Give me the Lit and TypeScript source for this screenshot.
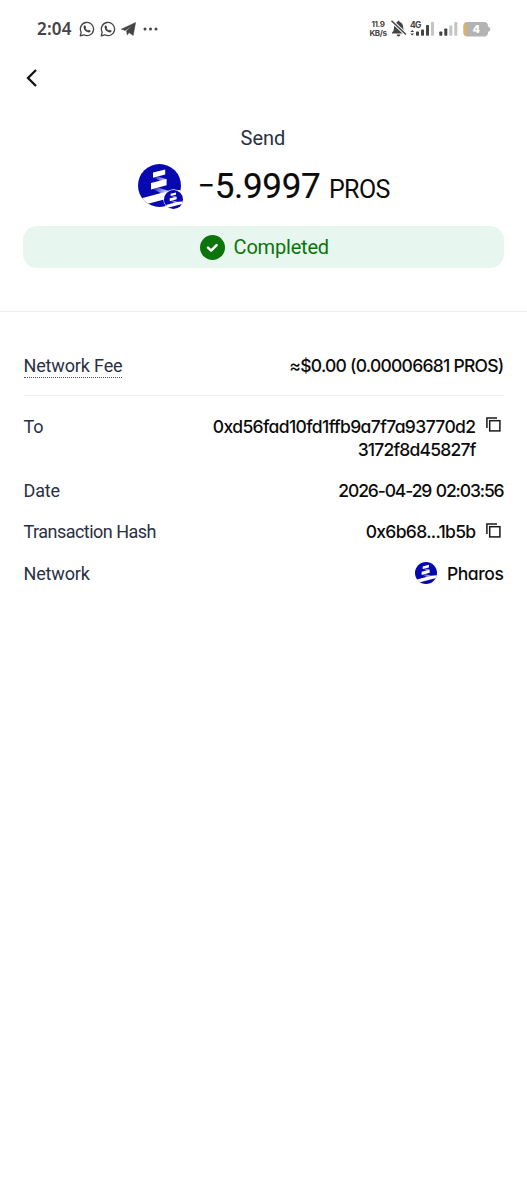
import { LitElement, html, css, svg } from "lit";
import { customElement, property } from "lit/decorators.js";

@customElement("pharos-logo")
class PharosLogo extends LitElement {
  static styles = css`
    :host { display: block; }
    svg { display: block; width: 100%; height: 100%; }
  `;
  render() {
    return html`<svg viewBox="0 0 43 43">
      <defs>
        <clipPath id="c"><circle cx="21.5" cy="21.5" r="21.5" /></clipPath>
        <linearGradient id="g" x1="0" y1="0" x2="1" y2="0.3">
          <stop offset="0" stop-color="#fff" stop-opacity="0.05" />
          <stop offset="1" stop-color="#fff" stop-opacity="0.8" />
        </linearGradient>
      </defs>
      <g clip-path="url(#c)">
        <rect width="43" height="43" fill="#0808b0" />
        <path d="M15 8.6 27.2 5.5V10.6L15 13.8Z" fill="#fff" />
        <path d="M16.5 13.4 20 12.4 28.6 15.3 22 17Z" fill="url(#g)" />
        <path d="M13 18.9 28.6 15V21.2L13 25.4Z" fill="#fff" />
        <path d="M15 24.9 20 23.4 31 27 23 29.2Z" fill="url(#g)" />
        <path d="M0 35.2 31.5 26.7 43 26V31L4.5 41.2 0 42Z" fill="#fff" />
      </g>
    </svg>`;
  }
}

@customElement("copy-icon")
class CopyIcon extends LitElement {
  static styles = css`
    :host { display: block; width: 15px; height: 15px; }
    svg { display: block; }
  `;
  render() {
    return html`<svg width="15" height="15" viewBox="0 0 15 15" fill="none" stroke="#1a1a1a" stroke-width="1.5">
      <path d="M.9 11V.9H11" /><rect x="3.7" y="3.7" width="10.2" height="10.2" />
    </svg>`;
  }
}

@customElement("detail-row")
class DetailRow extends LitElement {
  static styles = css`
    :host { display: flex; justify-content: space-between; align-items: flex-start; line-height: 23px; }
    .label { font-family: Roboto, sans-serif; font-size: 18px; color: #2a2f45; letter-spacing: -0.15px; white-space: nowrap; }
    .long { letter-spacing: -0.53px; }
    .hint { border-bottom: 1px dotted #50556a; }
    .value { text-align: right; color: #0b0b0b; font: 450 17.5px/23px Inter, sans-serif; font-feature-settings: "cv11"; letter-spacing: -0.55px; }
  `;
  @property() label = "";
  @property({ type: Boolean }) hint = false;
  render() {
    const tone = this.hint ? "hint" : this.label.length > 12 ? "long" : "";
    return html`<span class="label ${tone}">${this.label}</span><div class="value"><slot></slot></div>`;
  }
}

const chat = svg`<path d="M1.2 14.8 2.2 11.2A6.6 6.6 0 1 1 4.8 13.8Z" fill="none" stroke="#444" stroke-width="1.3" stroke-linejoin="round"/>
  <path d="M5.2 4.6 6.3 4.4 7.2 6.4 6.6 7.3Q7.4 8.9 9 9.5L9.8 8.7 11.7 9.7Q11.6 11.5 9.8 11.5 5 10.6 4.6 6.5 4.5 5.2 5.2 4.6Z" fill="#444"/>`;

@customElement("app-root")
class AppRoot extends LitElement {
  static styles = css`
    :host { display: block; height: 1200px; background: #fff; font-family: Roboto, sans-serif; color: #0b0b0b; overflow: hidden; }
    svg { display: block; flex: none; }
    .status { display: flex; align-items: center; height: 57px; padding: 0 36px 0 37px; box-sizing: border-box; color: #444; }
    .clock { font: 600 17px/20px "Noto Sans", sans-serif; width: 42px; white-space: nowrap; letter-spacing: 0.2px; }
    .apps { display: flex; align-items: center; gap: 5px; flex: 1; }
    .rate { font: 700 8px/9px Inter, sans-serif; text-align: center; width: 18px; letter-spacing: -0.4px; margin-right: 3px; white-space: nowrap; }
    .nav { height: 42px; padding-left: 25px; display: flex; align-items: center; }
    .title { margin-top: 27px; height: 24px; line-height: 24px; text-align: center; font-size: 20px; color: #2a2f45; padding-right: 1px; }
    .amount { display: flex; align-items: center; padding-left: 137.5px; height: 47px; margin-top: 12px; }
    .token { position: relative; width: 43px; height: 43px; margin-right: 17px; flex: none; }
    .badge { position: absolute; left: 26px; top: 26px; width: 19px; height: 19px; border-radius: 50%; box-shadow: 0 0 0 .7px #fff; }
    .sum { display: flex; align-items: baseline; white-space: nowrap; padding-top: 2px; }
    .minus { font-size: 30px; line-height: 30px; letter-spacing: 0; vertical-align: 2.5px; }
    .num { font-size: 35px; line-height: 41px; letter-spacing: -0.3px; -webkit-text-stroke: 0.2px #0b0b0b; }
    .unit { font-size: 25px; margin-left: 8.5px; letter-spacing: -0.6px; }
    .pill { margin: 17px 23.5px 0 23px; height: 42px; border-radius: 14px; background: #e7f7ef; display: flex; align-items: center; justify-content: center; gap: 9px; color: #0b740b; font-size: 20px; letter-spacing: -0.2px; padding-left: 2px; box-sizing: border-box; }
    .rule { height: 1px; background: #ececee; margin-top: 43px; }
    .details { padding: 0 23.5px 0 23.5px; }
    .fee { padding: 42px 0 17px; border-bottom: 1px solid #ededef; }
    .list { display: flex; flex-direction: column; gap: 18.4px; padding-top: 18.6px; }
    .copy { display: flex; align-items: flex-start; gap: 10px; }
    .copy copy-icon { margin: 2.5px 3px 0 0; }
    .addr { letter-spacing: -0.62px; }
    .addr2 { letter-spacing: -0.8px; }
    .hash { letter-spacing: -0.68px; }
    .date { letter-spacing: -1.13px; word-spacing: 1px; }
    .name { letter-spacing: -0.4px; }
    .net { display: flex; align-items: center; gap: 10px; }
    .net pharos-logo { width: 22px; height: 22px; }
    .fee-v { letter-spacing: -0.74px; }
  `;
  render() {
    return html`
      <div class="status">
        <span class="clock">2:04</span>
        <div class="apps">
          <svg width="16" height="16" viewBox="0 0 16 16">${chat}</svg>
          <svg width="16" height="16" viewBox="0 0 16 16">${chat}</svg>
          <svg width="15" height="14" viewBox="0 0 15 14"><path d="M.3 7.2 14.6.4 12.2 13.4 8 10.6 6.3 13 5.5 8.8 11 3.8 4.2 8.4Z" fill="#444" stroke="#444" stroke-width=".5" /></svg>
          <svg width="17" height="4" viewBox="0 0 17 4" fill="#444"><circle cx="4" cy="2" r="1.5" /><circle cx="9.5" cy="2" r="1.5" /><circle cx="15" cy="2" r="1.5" /></svg>
        </div>
        <div class="rate">11.9<br />KB/s</div>
        <svg width="101" height="20" viewBox="390 18.5 101 20">
          <path d="M392 33V32Q394 30.5 394 27.5 394 22.5 397.3 21.5 397.5 20 398.5 20 399.5 20 399.7 21.5 403.2 22.5 403.2 27.5 403.2 30.5 405.5 32V33ZM396.5 34H400.5Q400 36 398.5 36 397 36 396.5 34Z" fill="#444" />
          <path d="M391.5 20.2 406 34" stroke="#fff" stroke-width="3.4" /><path d="M391.5 20.2 406 34" stroke="#444" stroke-width="1.5" />
          <text x="410" y="27.2" font-family="Inter" font-weight="700" font-size="8.5" fill="#444" textLength="11.5">4G</text>
          <path d="M410.3 31.5 412.2 29.4 414.1 31.5ZM410.3 33 412.2 35.1 414.1 33Z" fill="#444" />
          <g fill="#444"><rect x="416" y="31" width="3" height="4.3" rx=".7" /><rect x="421" y="29" width="3" height="6.3" rx=".7" /><rect x="426" y="24.5" width="3" height="10.8" rx=".7" /></g>
          <rect x="431" y="21.5" width="3" height="13.8" rx=".7" fill="#c4c4c4" />
          <g fill="#444"><rect x="439.3" y="31" width="3" height="4.3" rx=".7" /><rect x="444.3" y="28" width="3" height="7.3" rx=".7" /></g>
          <g fill="#c4c4c4"><rect x="449.3" y="25" width="3" height="10.3" rx=".7" /><rect x="454.3" y="21.5" width="3" height="13.8" rx=".7" /></g>
          <path d="M467.5 21.5H484A4 4 0 0 1 488 25.5V26Q490.3 26.5 490.3 28.7 490.3 30.9 488 31.4V31.9A4 4 0 0 1 484 35.9H467.5A4 4 0 0 1 463.5 31.9V25.5A4 4 0 0 1 467.5 21.5Z" fill="#b3b3b3" />
          <path d="M466.5 21.7V35.7A4 4 0 0 1 463.5 31.9V25.5A4 4 0 0 1 466.5 21.7Z" fill="#dfb15c" />
          <text x="476.3" y="32.6" text-anchor="middle" font-family="Inter" font-weight="800" font-size="11" fill="#fff">4</text>
        </svg>
      </div>
      <div class="nav"><svg width="14" height="18" viewBox="0 0 14 18"><path d="M11 1 3 9 11 17" fill="none" stroke="#111" stroke-width="2.3" /></svg></div>
      <div class="title">Send</div>
      <div class="amount">
        <div class="token"><pharos-logo></pharos-logo><pharos-logo class="badge"></pharos-logo></div>
        <div class="sum"><span class="num"><span class="minus">−</span>5.9997</span><span class="unit">PROS</span></div>
      </div>
      <div class="pill">
        <svg width="25" height="25" viewBox="0 0 25 25"><circle cx="12.5" cy="12.5" r="12.5" fill="#0b740b" /><path d="M8 12.6 11.1 15.6 16.6 10.1" fill="none" stroke="#fff" stroke-width="2.5" stroke-linecap="round" stroke-linejoin="round" /></svg>
        <span>Completed</span>
      </div>
      <div class="rule"></div>
      <div class="details">
        <div class="fee"><detail-row label="Network Fee" hint><span class="fee-v">≈$0.00 (0.00006681 PROS)</span></detail-row></div>
        <div class="list">
          <detail-row label="To"><div class="copy"><span class="addr">0xd56fad10fd1ffb9a7f7a93770d2<br /><span class="addr2">3172f8d45827f</span></span><copy-icon></copy-icon></div></detail-row>
          <detail-row label="Date"><span class="date">2026-04-29 02:03:56</span></detail-row>
          <detail-row label="Transaction Hash"><div class="copy"><span class="hash">0x6b68...1b5b</span><copy-icon></copy-icon></div></detail-row>
          <detail-row label="Network"><div class="net"><pharos-logo></pharos-logo><span class="name">Pharos</span></div></detail-row>
        </div>
      </div>`;
  }
}
